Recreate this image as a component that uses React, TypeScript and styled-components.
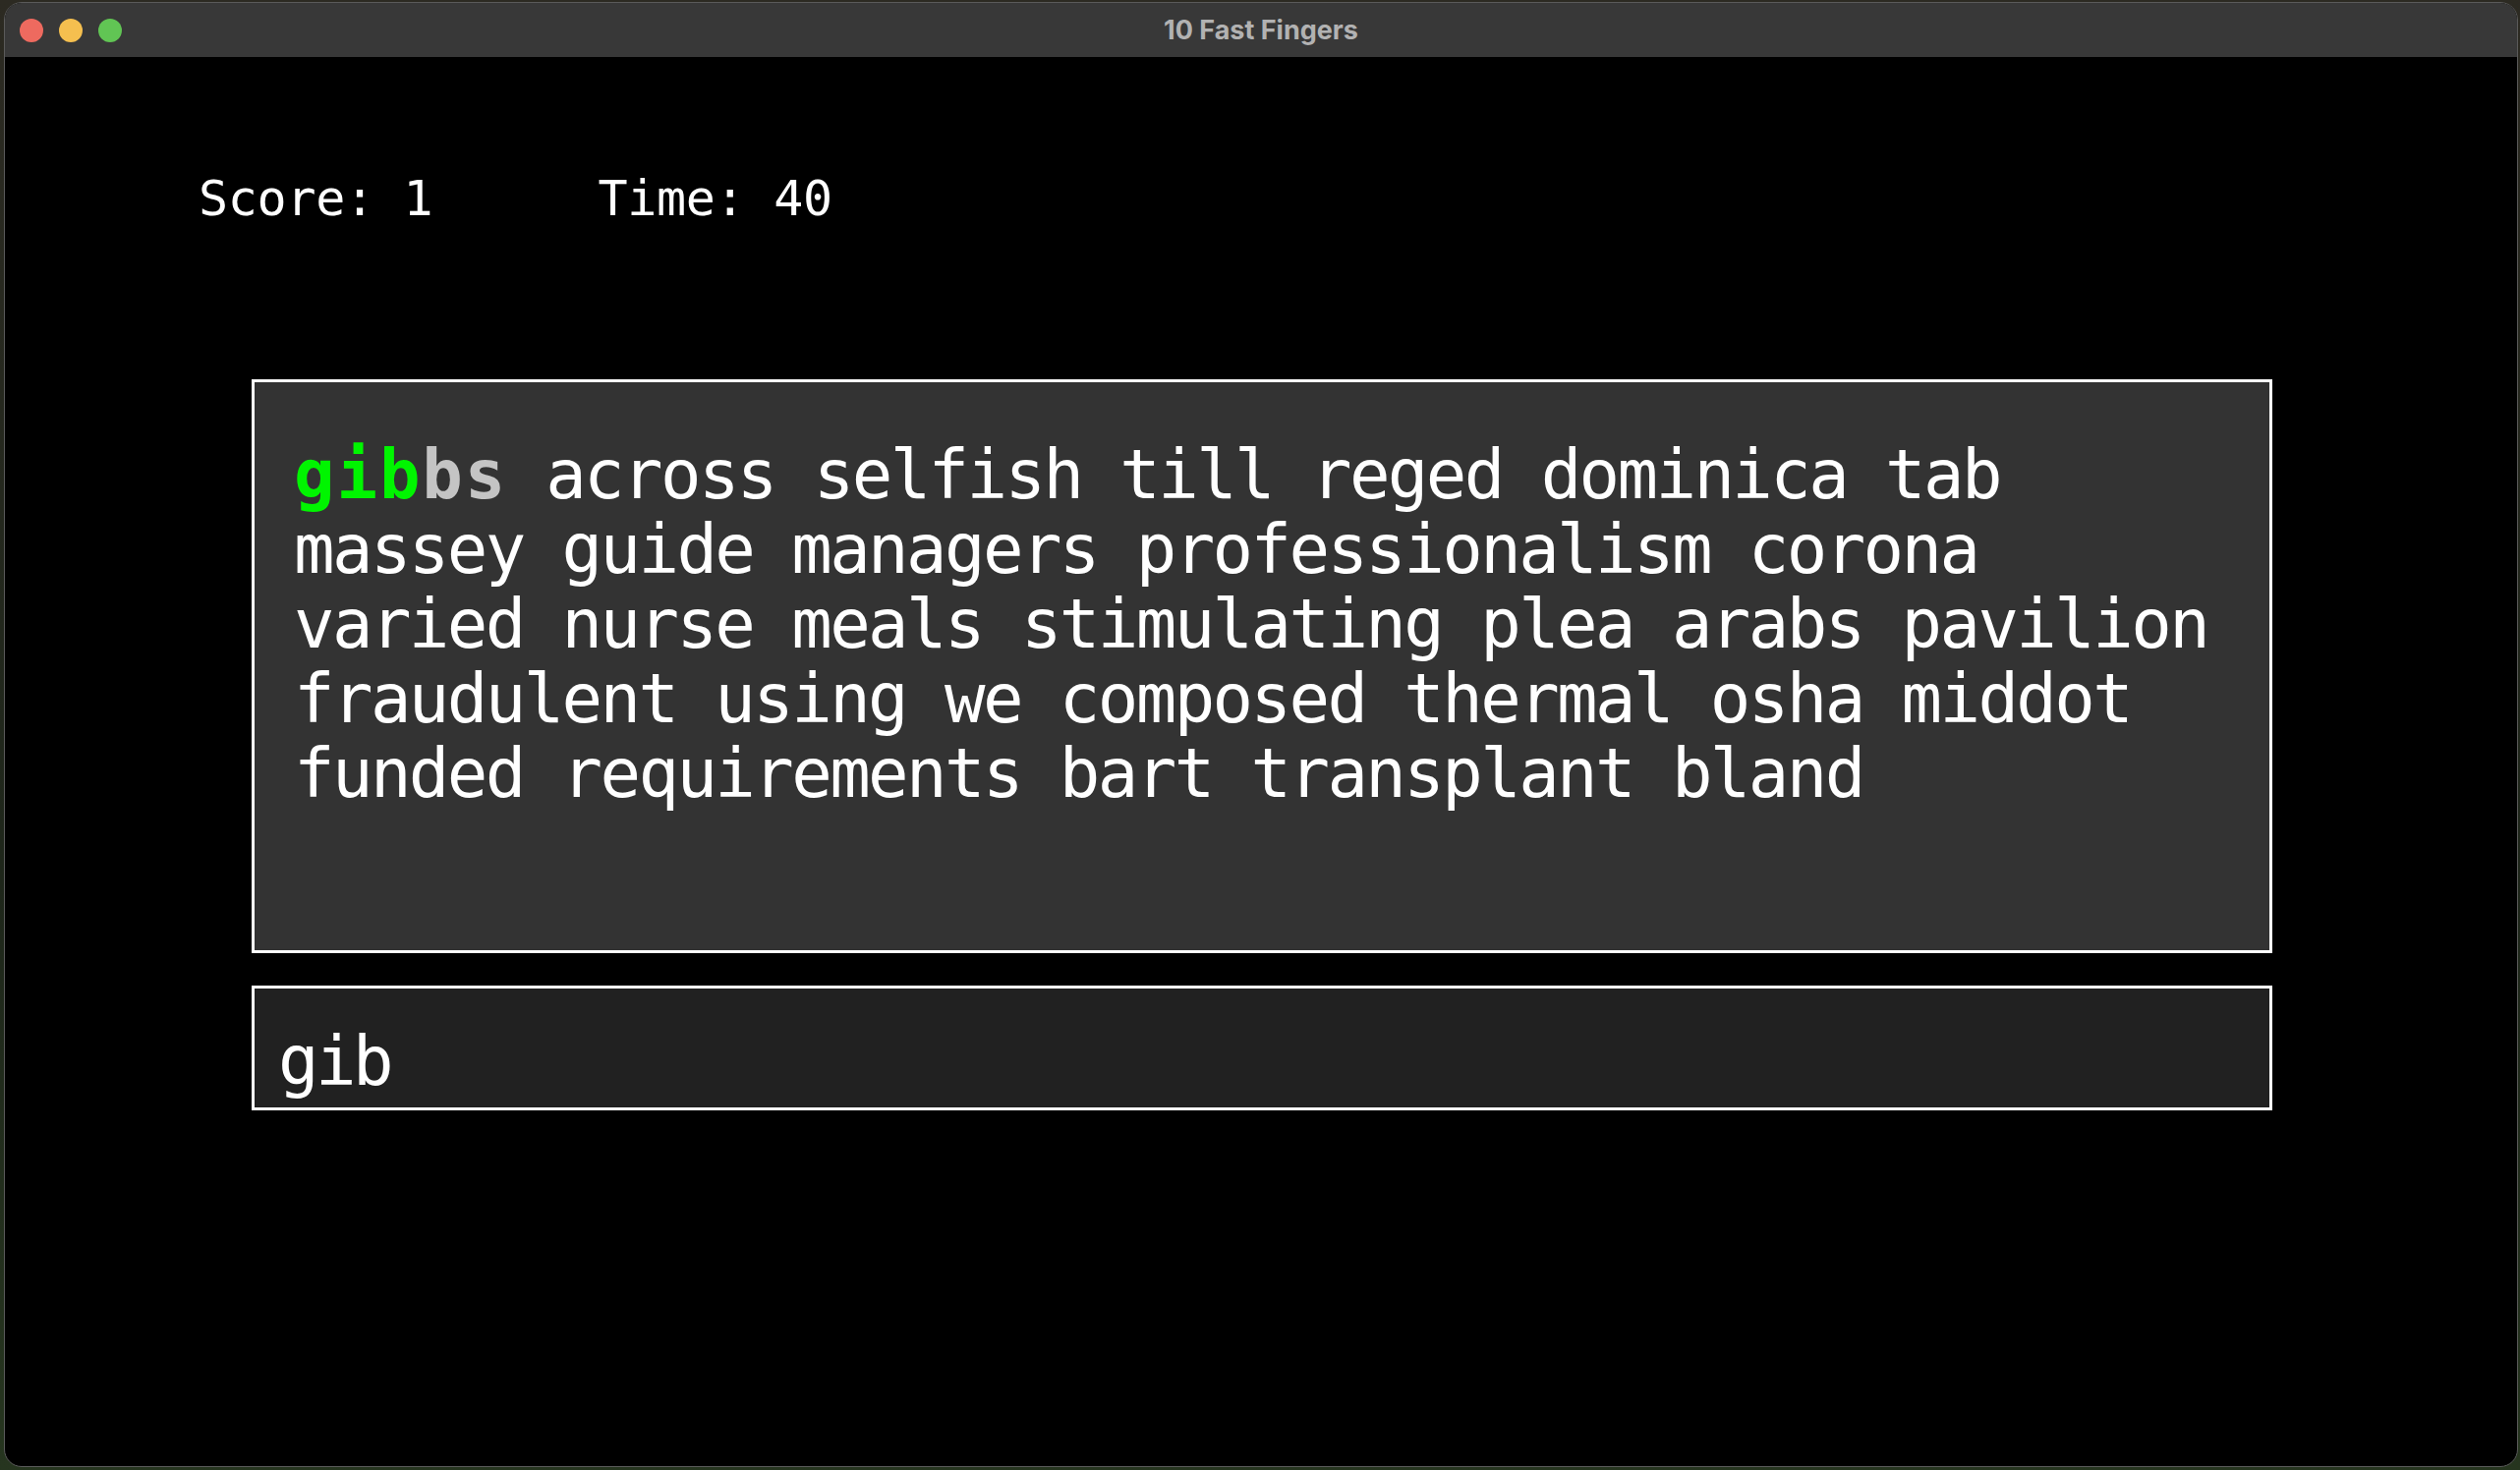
import React from 'react';
import styled, { createGlobalStyle } from 'styled-components';

const GlobalStyle = createGlobalStyle`
  html, body {
    margin: 0;
    padding: 0;
    background: linear-gradient(180deg, #2c2a22 0%, #1e261a 60%, #26351f 100%);
  }
  #root {
    height: 1496px;
  }
`;

const Desktop = styled.div`
  height: 1496px;
  box-sizing: border-box;
  padding: 2px 2px 3px 4px;
  display: flex;
`;

const Window = styled.div`
  flex: 1;
  display: flex;
  flex-direction: column;
  border: 1px solid #5a5a5a;
  border-radius: 18px;
  overflow: hidden;
  background: #000;
`;

const TitleBar = styled.div`
  height: 55px;
  flex-shrink: 0;
  background: #383838;
  display: grid;
  grid-template-columns: 1fr auto 1fr;
  align-items: center;
  padding-left: 15px;
`;

const Lights = styled.div`
  display: flex;
  gap: 16px;
`;

const Light = styled.span<{ color: string }>`
  width: 24px;
  height: 24px;
  border-radius: 50%;
  background: ${props => props.color};
`;

const Title = styled.div`
  font-family: Inter, 'Liberation Sans', sans-serif;
  font-weight: 700;
  font-size: 27px;
  color: #b2b2b2;
  margin-left: -15px;
`;

const Content = styled.div`
  flex: 1;
  padding: 115px 0 0 197px;
  display: flex;
  flex-direction: column;
`;

const StatsRow = styled.div`
  display: flex;
  gap: 168px;
  font-family: 'DejaVu Sans Mono', 'Liberation Mono', monospace;
  font-size: 50px;
  letter-spacing: -0.3px;
  line-height: normal;
  color: #fff;
`;

const Stat = styled.span`
  white-space: pre;
`;

const Boxes = styled.div`
  margin: 155px 0 0 54px;
  width: 2056px;
  display: flex;
  flex-direction: column;
  gap: 33px;
`;

const WordsBox = styled.div`
  height: 584px;
  box-sizing: border-box;
  border: 3px solid #fff;
  background: #333333;
  padding: 56px 43px 0 40px;
  font-family: 'DejaVu Sans Mono', 'Liberation Mono', monospace;
  font-size: 69px;
  letter-spacing: -2.6px;
  line-height: 76px;
  color: #fff;
`;

const CurrentPart = styled.span<{ $color: string }>`
  font-weight: 700;
  letter-spacing: 1.9px;
  color: ${props => props.$color};
`;

const InputBox = styled.div`
  height: 127px;
  box-sizing: border-box;
  border: 3px solid #fff;
  background: #212121;
  padding: 34px 0 0 24px;
  font-family: 'DejaVu Sans Mono', 'Liberation Mono', monospace;
  font-size: 69px;
  letter-spacing: -3.5px;
  line-height: normal;
  color: #fff;
`;

const words = [
  'across', 'selfish', 'till', 'reged', 'dominica', 'tab',
  'massey', 'guide', 'managers', 'professionalism', 'corona',
  'varied', 'nurse', 'meals', 'stimulating', 'plea', 'arabs', 'pavilion',
  'fraudulent', 'using', 'we', 'composed', 'thermal', 'osha', 'middot',
  'funded', 'requirements', 'bart', 'transplant', 'bland',
];

const App: React.FC = () => {
  const current = 'gibbs';
  const input = 'gib';

  return (
    <>
      <GlobalStyle />
      <Desktop>
        <Window>
          <TitleBar>
            <Lights>
              <Light color="#ee6a5f" />
              <Light color="#f5bf4f" />
              <Light color="#61c554" />
            </Lights>
            <Title>10 Fast Fingers</Title>
            <div />
          </TitleBar>
          <Content>
            <StatsRow>
              <Stat>Score: 1</Stat>
              <Stat>Time: 40</Stat>
            </StatsRow>
            <Boxes>
              <WordsBox>
                <CurrentPart $color="#00f500">{current.slice(0, input.length)}</CurrentPart>
                <CurrentPart $color="#c4c4c4">{current.slice(input.length)}</CurrentPart>
                {' ' + words.join(' ')}
              </WordsBox>
              <InputBox>{input}</InputBox>
            </Boxes>
          </Content>
        </Window>
      </Desktop>
    </>
  );
};

export default App;
